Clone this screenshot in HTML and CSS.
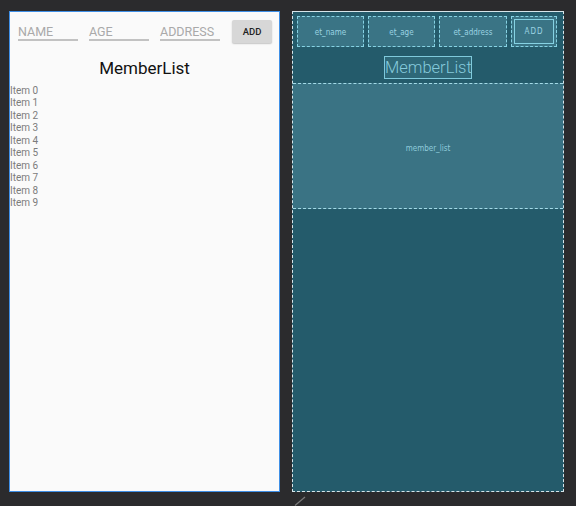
FILE: index.html
```html
<!DOCTYPE html>
<html>
<head>
<meta charset="utf-8">
<link rel="stylesheet" href="styles.css">
</head>
<body>
<div class="stage">
  <div class="design">
    <div class="form">
      <div class="field">NAME</div>
      <div class="field">AGE</div>
      <div class="field">ADDRESS</div>
      <div class="btn">ADD</div>
    </div>
    <div class="title">MemberList</div>
    <div class="items">
      <div>Item 0</div><div>Item 1</div><div>Item 2</div><div>Item 3</div><div>Item 4</div>
      <div>Item 5</div><div>Item 6</div><div>Item 7</div><div>Item 8</div><div>Item 9</div>
    </div>
  </div>
  <div class="bpcol">
    <div class="blueprint">
      <div class="bprow">
        <div class="bpbox w67">et_name</div>
        <div class="bpbox w67">et_age</div>
        <div class="bpbox w68">et_address</div>
        <div class="bpbox bpbtn"><div class="bpinner">ADD</div></div>
      </div>
      <div class="bptitle">MemberList</div>
      <div class="bplist">member_list</div>
    </div>
    <svg class="handle" width="14" height="12" viewBox="0 0 14 12"><line x1="1" y1="11.5" x2="11" y2="3" stroke="#7a7a7a" stroke-width="1.2"/></svg>
  </div>
</div>
</body>
</html>
```
FILE: styles.css
```css
html, body {
  margin: 0;
  padding: 0;
  background: #2b2b2d;
  height: 100%;
  overflow: hidden;
}
.stage {
  display: flex;
  gap: 12px;
  padding: 11px 0 0 9px;
  font-family: Roboto, "Liberation Sans", sans-serif;
}
.design {
  width: 271px;
  height: 481px;
  box-sizing: border-box;
  border: 1px solid #3f8fe6;
  background: #fafafa;
}
.form {
  display: flex;
  align-items: flex-start;
  padding: 8px 0 0 8px;
}
.field {
  width: 60px;
  margin-right: 11px;
  padding-top: 5px;
  line-height: 14px;
  font-size: 12.5px;
  color: #a9a9a9;
  border-bottom: 2px solid #c2c2c2;
}
.field:nth-child(3) { margin-right: 12px; }
.btn {
  width: 40px;
  height: 23px;
  background: #d7d7d7;
  border-radius: 2px;
  box-shadow: 0 1px 1.5px rgba(0,0,0,0.22);
  font-size: 9.5px;
  font-weight: 500;
  color: #222;
  display: flex;
  align-items: center;
  justify-content: center;
}
.title {
  margin-top: 15px;
  line-height: 20px;
  font-size: 17px;
  text-align: center;
  color: #111;
}
.items {
  margin-top: 7px;
  font-size: 10px;
  line-height: 12.45px;
  color: #7c7c7c;
}
.bpcol {
  display: flex;
  flex-direction: column;
}
.blueprint {
  width: 272px;
  height: 481px;
  box-sizing: border-box;
  border: 1px dashed rgba(235, 245, 248, 0.9);
  border-top-style: solid;
  background: #245b6b;
  display: flex;
  flex-direction: column;
  align-items: center;
  font-family: "DejaVu Sans Condensed", "DejaVu Sans", sans-serif;
}
.bprow {
  align-self: stretch;
  display: flex;
  gap: 4px;
  padding: 4px 0 0 4px;
}
.bpbox {
  height: 31px;
  box-sizing: border-box;
  border: 1px dashed #86d2e3;
  background: #3a7485;
  color: #9ad3e2;
  font-size: 8px;
  display: flex;
  align-items: center;
  justify-content: center;
  padding-top: 2px;
}
.w67 { width: 67px; }
.w68 { width: 68px; }
.bpbtn {
  width: 46px;
  padding: 2px;
}
.bpinner {
  width: 100%;
  height: 100%;
  box-sizing: border-box;
  border: 1px solid #86d2e3;
  display: flex;
  align-items: center;
  justify-content: center;
  letter-spacing: 1px;
  font-size: 8px;
}
.bptitle {
  margin-top: 9px;
  width: 88px;
  height: 23px;
  box-sizing: border-box;
  border: 1px solid #7fc9db;
  background: #2e6878;
  color: #86cbdc;
  font-family: Roboto, "Liberation Sans", sans-serif;
  font-weight: 300;
  font-size: 16.5px;
  line-height: 22px;
  text-align: center;
  overflow: hidden;
}
.bplist {
  margin-top: 4px;
  align-self: stretch;
  height: 126px;
  box-sizing: border-box;
  border-top: 1px dashed #a4dbe8;
  border-bottom: 1px dashed #a4dbe8;
  background: #3a7384;
  color: #8fcbdb;
  font-size: 8px;
  display: flex;
  align-items: center;
  justify-content: center;
  padding-top: 4px;
}
.handle {
  margin: 2px 0 0 2px;
  display: block;
}
```
